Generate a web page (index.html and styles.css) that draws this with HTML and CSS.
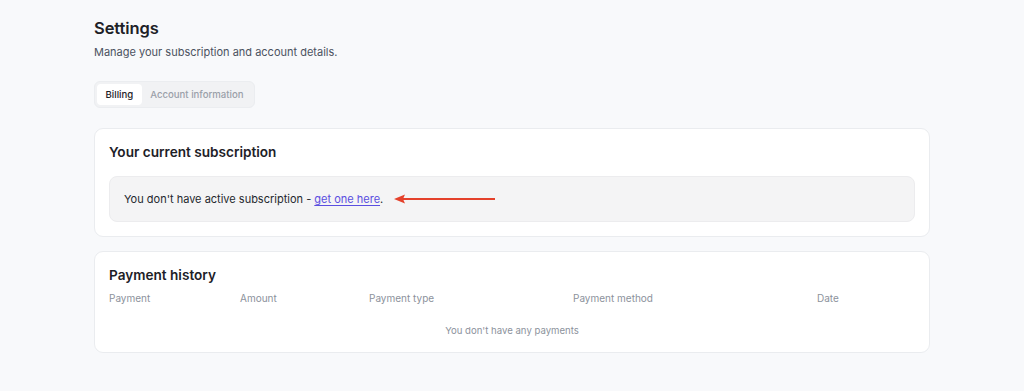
FILE: index.html
```html
<!DOCTYPE html>
<html lang="en">
<head>
<meta charset="utf-8">
<title>Settings</title>
<link rel="stylesheet" href="styles.css">
</head>
<body>
<main class="page">
  <h1 class="title">Settings</h1>
  <p class="subtitle">Manage your subscription and account details.</p>
  <div class="tabs">
    <span class="tab active">Billing</span>
    <span class="tab">Account information</span>
  </div>
  <section class="card">
    <h2 class="card-title">Your current subscription</h2>
    <div class="notice">
      <span>You don't have active subscription - <a href="#" class="link">get one here</a>.</span>
      <svg class="arrow" width="102" height="10" viewBox="0 0 102 10"><path d="M8 5 H101" stroke="#e4412b" stroke-width="2" fill="none"/><path d="M0 5 L11 0.5 L9 5 L11 9.5 Z" fill="#e4412b"/></svg>
    </div>
  </section>
  <section class="card card-history">
    <h2 class="card-title">Payment history</h2>
    <div class="table-head">
      <span>Payment</span>
      <span>Amount</span>
      <span>Payment type</span>
      <span>Payment method</span>
      <span>Date</span>
    </div>
    <div class="empty">You don't have any payments</div>
  </section>
</main>
</body>
</html>
```
FILE: styles.css
```css
* { box-sizing: border-box; }
html, body { margin: 0; padding: 0; }
body {
  background: #f8f9fb;
  font-family: Inter, "Noto Sans", "Liberation Sans", sans-serif;
  color: #1d2127;
}
.page {
  width: 836px;
  margin: 0 auto;
  padding-top: 16px;
}
.title {
  margin: 0;
  font-size: 16.5px;
  line-height: 24px;
  font-weight: 600;
  letter-spacing: -0.1px;
}
.subtitle {
  margin: 4px 0 0;
  font-size: 11px;
  line-height: 16px;
  color: #4b5260;
}
.tabs {
  display: inline-flex;
  margin-top: 21px;
  padding: 2px;
  background: #f1f2f4;
  border: 1px solid #ebedf0;
  border-radius: 6px;
}
.tab {
  font-size: 9.6px;
  line-height: 21px;
  padding: 0 8.5px;
  font-weight: 500;
  color: #9aa0a9;
  border-radius: 4px;
}
.tab.active {
  background: #ffffff;
  color: #1d2127;
}
.card {
  margin-top: 20px;
  background: #ffffff;
  border: 1px solid #eaecef;
  border-radius: 9px;
  padding: 13px 14px 14px;
}
.card-history {
  margin-top: 14px;
  padding-bottom: 15px;
}
.card-title {
  margin: 0;
  font-size: 13.6px;
  line-height: 20px;
  font-weight: 600;
}
.notice {
  margin-top: 14px;
  height: 46px;
  display: flex;
  align-items: center;
  padding: 0 14px;
  background: #f4f4f5;
  border: 1px solid #ececee;
  border-radius: 8px;
  font-size: 11px;
  color: #24282e;
}
.link {
  color: #5a4ee0;
  text-decoration: underline;
  text-underline-offset: 2px;
}
.arrow {
  margin-left: 11px;
  margin-top: -1px;
}
.table-head {
  display: grid;
  grid-template-columns: 131px 129px 204px 244px 1fr;
  margin-top: 7px;
  font-size: 10px;
  line-height: 12px;
  color: #8c929c;
}
.empty {
  margin-top: 21px;
  text-align: center;
  font-size: 9.6px;
  line-height: 12px;
  color: #8c929c;
}
```
